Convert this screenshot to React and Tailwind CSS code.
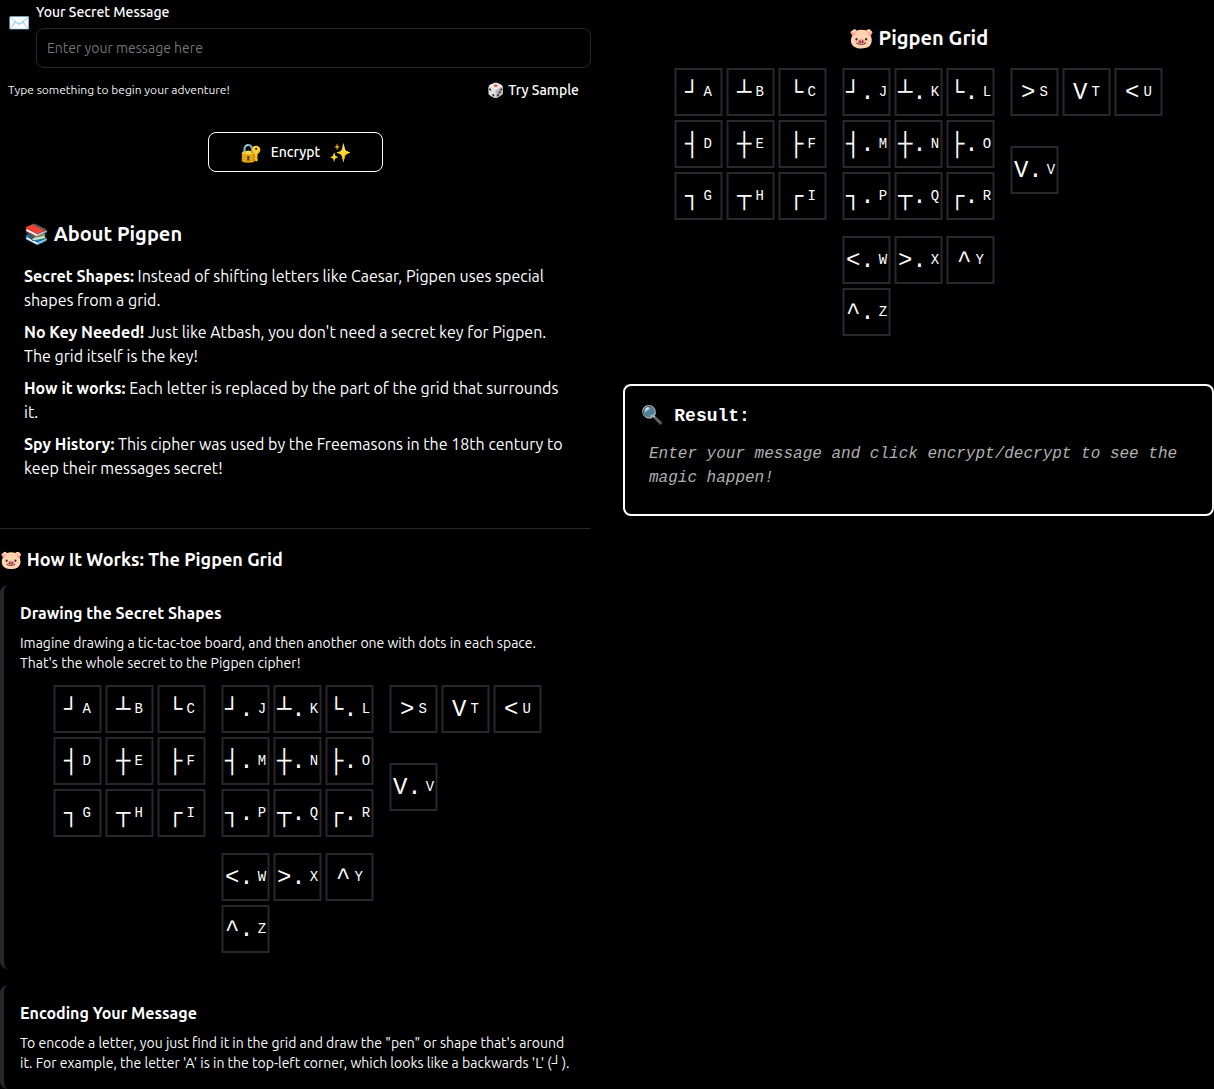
import React from "react";

const GROUPS = [
  [["┘", "A"], ["┴", "B"], ["└", "C"], ["┤", "D"], ["┼", "E"], ["├", "F"], ["┐", "G"], ["┬", "H"], ["┌", "I"]],
  [["┘.", "J"], ["┴.", "K"], ["└.", "L"], ["┤.", "M"], ["┼.", "N"], ["├.", "O"], ["┐.", "P"], ["┬.", "Q"], ["┌.", "R"]],
  [[">", "S"], ["V", "T"], ["<", "U"], ["V.", "V"]],
  [["<.", "W"], [">.", "X"], ["^", "Y"], ["^.", "Z"]],
];

function PigpenGrid() {
  return (
    <div className="flex flex-wrap justify-center gap-4 font-['Liberation_Mono',monospace]">
      {GROUPS.map((group, i) => (
        <div key={i} className="grid grid-cols-3 gap-1">
          {group.map(([shape, letter]) => (
            <div
              key={letter}
              className="relative flex h-12 w-12 items-center justify-center gap-1 before:absolute before:inset-0 before:transform-[translateX(-0.5px)] before:border-2 before:border-[#27272e] before:content-['']"
            >
              <span className="pt-px text-2xl">{shape}</span>
              <span className="text-sm">{letter}</span>
            </div>
          ))}
        </div>
      ))}
    </div>
  );
}

function Line({ children }) {
  return (
    <span className="block">
      <span className="inline-block whitespace-nowrap">{children}</span>
    </span>
  );
}

function Card({ title, children }) {
  return (
    <section className="rounded-lg border-l-4 border-[#27272e] p-4">
      <h3 className="mb-2 text-base font-semibold">{title}</h3>
      {children}
    </section>
  );
}

export default function App() {
  return (
    <div className="grid h-[1089px] w-[1214px] grid-cols-[591px_591px] gap-8 overflow-hidden bg-black font-['Ubuntu','Noto_Sans',sans-serif] text-white">
      <div>
        <div className="flex h-[68px] pl-2">
          <span className="w-7 pt-2.5 text-lg leading-6">✉️</span>
          <div className="flex-1 pt-0.5">
            <label htmlFor="msg" className="block text-sm font-medium">Your Secret Message</label>
            <input
              id="msg"
              placeholder="Enter your message here"
              className="mt-1.5 block h-10 w-full rounded-lg border border-[#27272a] bg-black px-2.5 text-sm placeholder:text-[#757575]"
            />
          </div>
        </div>
        <div className="mt-1 flex h-9 items-center justify-between pl-2 pr-3">
          <p className="text-xs text-[#f0f0f0]">Type something to begin your adventure!</p>
          <button className="flex items-center gap-1 text-sm font-medium">
            <span>🎲</span>
            <span>Try Sample</span>
          </button>
        </div>
        <div className="mt-6 flex justify-center">
          <button className="flex h-10 w-[175px] items-center justify-center gap-[8.5px] rounded-lg border border-white text-sm font-medium">
            <span className="text-lg">🔐</span>
            <span>Encrypt</span>
            <span className="text-lg">✨</span>
          </button>
        </div>
        <section className="mt-12 px-6">
          <h2 className="text-xl font-semibold leading-7">
            <span className="-ml-[0.5px] mr-[0.5px]">📚</span> About Pigpen
          </h2>
          <div className="mt-4 space-y-2 text-base leading-6">
            <p>
              <Line><b className="font-semibold">Secret Shapes:</b> Instead of shifting letters like Caesar, Pigpen uses special</Line>
              <Line>shapes from a grid.</Line>
            </p>
            <p>
              <Line><b className="font-semibold">No Key Needed!</b> Just like Atbash, you don't need a secret key for Pigpen.</Line>
              <Line>The grid itself is the key!</Line>
            </p>
            <p>
              <Line><b className="font-semibold">How it works:</b> Each letter is replaced by the part of the grid that surrounds</Line>
              <Line>it.</Line>
            </p>
            <p>
              <Line><b className="font-semibold">Spy History:</b> This cipher was used by the Freemasons in the 18th century to</Line>
              <Line>keep their messages secret!</Line>
            </p>
          </div>
        </section>
        <section className="mt-12 border-t border-[#27272a] pt-4">
          <h2 className="text-lg font-semibold leading-7">
            <span className="mr-[0.5px]">🐷</span> How It Works: The Pigpen Grid
          </h2>
          <div className="mt-3 space-y-4">
            <Card title="Drawing the Secret Shapes">
              <p className="mb-3 text-sm text-[#fafafa]">
                <Line>Imagine drawing a tic-tac-toe board, and then another one with dots in each space.</Line>
                <Line>That's the whole secret to the Pigpen cipher!</Line>
              </p>
              <PigpenGrid />
            </Card>
            <Card title="Encoding Your Message">
              <p className="text-sm text-[#fafafa]">
                <Line>To encode a letter, you just find it in the grid and draw the "pen" or shape that's around</Line>
                <Line>it. For example, the letter 'A' is in the top-left corner, which looks like a backwards 'L' (┘).</Line>
              </p>
            </Card>
          </div>
        </section>
      </div>
      <div>
        <h2 className="pt-6 text-center text-xl font-semibold leading-7">🐷 Pigpen Grid</h2>
        <div className="mt-4">
          <PigpenGrid />
        </div>
        <section className="mt-12 h-[132px] rounded-lg border-2 border-white p-4 font-['Liberation_Mono',monospace]">
          <h3 className="text-lg font-bold leading-7">
            <span className="mr-[0.5px]">🔍</span> Result:
          </h3>
          <p className="mt-3 px-2 text-base italic leading-6 text-[#b0b0b0]">
            Enter your message and click encrypt/decrypt to see the magic happen!
          </p>
        </section>
      </div>
    </div>
  );
}
